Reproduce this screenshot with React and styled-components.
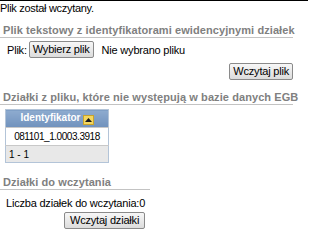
import styled, { createGlobalStyle } from "styled-components";

const GlobalStyle = createGlobalStyle`
    html, body {
        margin: 0;
        padding: 0;
        background: #fff;
    }
    body {
        font-family: "Liberation Sans", Arial, sans-serif;
        font-size: 11px;
        letter-spacing: -0.2px;
        color: #000;
    }
`;

const Page = styled.div`
    width: 308px;
    height: 234px;
    border-top: 1px solid #000;
    box-sizing: border-box;
    overflow: hidden;
`;

const Message = styled.div`
    line-height: 14px;
    letter-spacing: -0.3px;
`;

const Section = styled.div`
    width: ${(props) => props.width}px;
    margin-top: ${(props) => props.top}px;
`;

const SectionTitle = styled.div`
    color: #808080;
    font-weight: bold;
    font-size: 11px;
    letter-spacing: 0.08px;
    padding-left: 3px;
    height: 14px;
    line-height: 14px;
    border-bottom: 1px solid #c3c3c3;
    white-space: nowrap;
`;

const FileRow = styled.div`
    display: flex;
    align-items: center;
    padding: 3px 0 0 7px;
`;

const Label = styled.span`
    margin-right: 2px;
`;

const FileName = styled.span`
    margin-left: 8px;
`;

const Button = styled.button`
    font-family: "Liberation Sans", Arial, sans-serif;
    font-size: 11px;
    letter-spacing: -0.2px;
    color: #000;
    height: 17px;
    padding: 0 ${(props) => (props.wide ? 5 : 3)}px;
    margin: 0;
    border: 1px solid #8a8a8a;
    border-radius: 2px;
    background: linear-gradient(#f7f7f7, #dcdcdc);
    line-height: 13px;
`;

const RightBar = styled.div`
    display: flex;
    justify-content: flex-end;
    padding-top: 5px;
`;

const Grid = styled.table`
    border-collapse: collapse;
    margin: 4px 0 0 5px;
    width: 104px;
    border: 1px solid #b3c4d8;
`;

const HeadCell = styled.th`
    height: 17px;
    padding: 0;
    background: linear-gradient(#8eabcf, #7092bd);
    color: #fff;
    font-size: 10px;
    font-weight: bold;
    letter-spacing: 0;
    text-align: center;
    white-space: nowrap;
`;

const SortIcon = styled.span`
    display: inline-flex;
    align-items: center;
    justify-content: center;
    box-sizing: border-box;
    width: 11px;
    height: 10px;
    margin-left: 2px;
    vertical-align: -1px;
    background: #f4d760;
    border: 1px solid #c9a42c;
`;

const Cell = styled.td`
    height: ${(props) => (props.shade ? 16 : 17)}px;
    padding: 0 3px;
    text-align: ${(props) => (props.shade ? "left" : "center")};
    background: ${(props) => (props.shade ? "#e8e8e8" : "#fff")};
    border-top: 1px solid #c8c8c8;
    font-size: 10px;
    letter-spacing: ${(props) => (props.shade ? "0" : "-0.45px")};
    white-space: nowrap;
`;

const CountText = styled.div`
    padding: 6px 0 0 6px;
    line-height: 14px;
    white-space: nowrap;
`;

const CountBar = styled.div`
    padding: 2px 0 0 64px;
`;

export default function App() {
    return (
        <>
            <GlobalStyle />
            <Page>
                <Message>Plik został wczytany.</Message>

                <Section width={293} top={8}>
                    <SectionTitle>Plik tekstowy z identyfikatorami ewidencyjnymi działek</SectionTitle>
                    <FileRow>
                        <Label>Plik:</Label>
                        <Button>Wybierz plik</Button>
                        <FileName>Nie wybrano pliku</FileName>
                    </FileRow>
                    <RightBar>
                        <Button>Wczytaj plik</Button>
                    </RightBar>
                </Section>

                <Section width={293} top={10}>
                    <SectionTitle>Działki z pliku, które nie występują w bazie danych EGB</SectionTitle>
                </Section>
                <Grid>
                    <thead>
                        <tr>
                            <HeadCell>
                                Identyfikator
                                <SortIcon>
                                    <svg width="7" height="4" viewBox="0 0 7 4">
                                        <path d="M0 4 L3.5 0 L7 4 Z" fill="#1a1a1a" />
                                    </svg>
                                </SortIcon>
                            </HeadCell>
                        </tr>
                    </thead>
                    <tbody>
                        <tr>
                            <Cell>081101_1.0003.3918</Cell>
                        </tr>
                        <tr>
                            <Cell shade>1 - 1</Cell>
                        </tr>
                    </tbody>
                </Grid>

                <Section width={150} top={12}>
                    <SectionTitle>Działki do wczytania</SectionTitle>
                    <CountText>Liczba działek do wczytania:0</CountText>
                    <CountBar>
                        <Button wide>Wczytaj działki</Button>
                    </CountBar>
                </Section>
            </Page>
        </>
    );
}
